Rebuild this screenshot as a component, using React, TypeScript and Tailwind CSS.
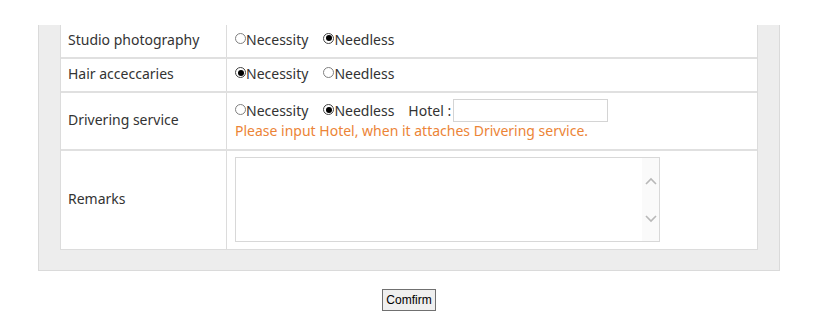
import { useState } from "react";

type Choice = "need" | "none";

function Radio({ checked, label, onClick }: { checked: boolean; label: string; onClick: () => void }) {
  return (
    <label className="inline-flex items-center cursor-pointer mr-[15px]" onClick={onClick}>
      <span
        className={`w-[11px] h-[11px] rounded-full border flex items-center justify-center bg-white -translate-y-[1px] ${
          checked ? "border-[#444]" : "border-[#808080]"
        }`}
      >
        {checked && <span className="w-[6px] h-[6px] rounded-full bg-black" />}
      </span>
      <span>{label}</span>
    </label>
  );
}

function RadioPair({ value, onChange }: { value: Choice; onChange: (v: Choice) => void }) {
  return (
    <>
      <Radio checked={value === "need"} label="Necessity" onClick={() => onChange("need")} />
      <Radio checked={value === "none"} label="Needless" onClick={() => onChange("none")} />
    </>
  );
}

function Chevron({ up }: { up?: boolean }) {
  return (
    <svg width="12" height="8" viewBox="0 0 12 8" className="block">
      <path
        d={up ? "M1 7 L6 2 L11 7" : "M1 1 L6 6 L11 1"}
        fill="none"
        stroke="#b8b8b8"
        strokeWidth="1.6"
      />
    </svg>
  );
}

export default function App() {
  const [studio, setStudio] = useState<Choice>("none");
  const [hair, setHair] = useState<Choice>("need");
  const [driver, setDriver] = useState<Choice>("none");

  return (
    <div className="w-[815px] h-[330px] bg-white pt-[25px] font-['Noto_Sans',sans-serif] text-[14px] text-[#333]">
      {/* gray panel */}
      <div className="ml-[38px] w-[742px] bg-[#ededed] border-x border-b border-[#dadada] px-[21px] pb-[20px]">
        <div className="bg-white border-x border-b border-[#dcdcdc]">
          {/* Studio photography */}
          <div className="flex h-[32px]">
            <div className="w-[166px] border-r border-[#dcdcdc] pl-[7px] pb-[4px] flex items-center">Studio photography</div>
            <div className="flex-1 pl-[8px] pb-[4px] flex items-center">
              <RadioPair value={studio} onChange={setStudio} />
            </div>
          </div>

          {/* Hair accessories */}
          <div className="flex h-[34px] border-t-2 border-[#e0e0e0]">
            <div className="w-[166px] border-r border-[#dcdcdc] pl-[7px] pb-[3px] flex items-center">Hair acceccaries</div>
            <div className="flex-1 pl-[8px] pb-[3px] flex items-center">
              <RadioPair value={hair} onChange={setHair} />
            </div>
          </div>

          {/* Drivering service */}
          <div className="flex h-[58px] border-t-2 border-[#e0e0e0]">
            <div className="w-[166px] border-r border-[#dcdcdc] pl-[7px] pb-[3px] flex items-center">Drivering service</div>
            <div className="flex-1 pl-[8px] pt-[6px]">
              <div className="flex items-center h-[23px]">
                <RadioPair value={driver} onChange={setDriver} />
                <span className="mr-[2px] -ml-[1px]">Hotel :</span>
                <input
                  type="text"
                  className="w-[155px] h-[23px] border border-[#d4d4d4] outline-none px-1 text-[13px]"
                />
              </div>
              <div className="text-[#ec8436] leading-[18px]">
                Please input Hotel, when it attaches Drivering service.
              </div>
            </div>
          </div>

          {/* Remarks */}
          <div className="flex h-[100px] border-t-2 border-[#e0e0e0]">
            <div className="w-[166px] border-r border-[#dcdcdc] pl-[7px] pb-[3px] flex items-center">Remarks</div>
            <div className="flex-1 pl-[8px] pt-[6px]">
              <div className="w-[425px] h-[85px] border border-[#d8d8d8] flex">
                <textarea className="flex-1 resize-none outline-none p-1 text-[13px]" />
                <div className="w-[17px] bg-[#fafafa] flex flex-col items-center justify-between pt-[19px] pb-[18px]">
                  <Chevron up />
                  <Chevron />
                </div>
              </div>
            </div>
          </div>
        </div>
      </div>

      <div className="ml-[38px] w-[742px] flex justify-center pt-[18px]">
        <button className="h-[22px] px-[3px] bg-[#efefef] border border-[#707070] font-['Liberation_Sans',sans-serif] text-[12px] text-black leading-none">
          Comfirm
        </button>
      </div>
    </div>
  );
}
